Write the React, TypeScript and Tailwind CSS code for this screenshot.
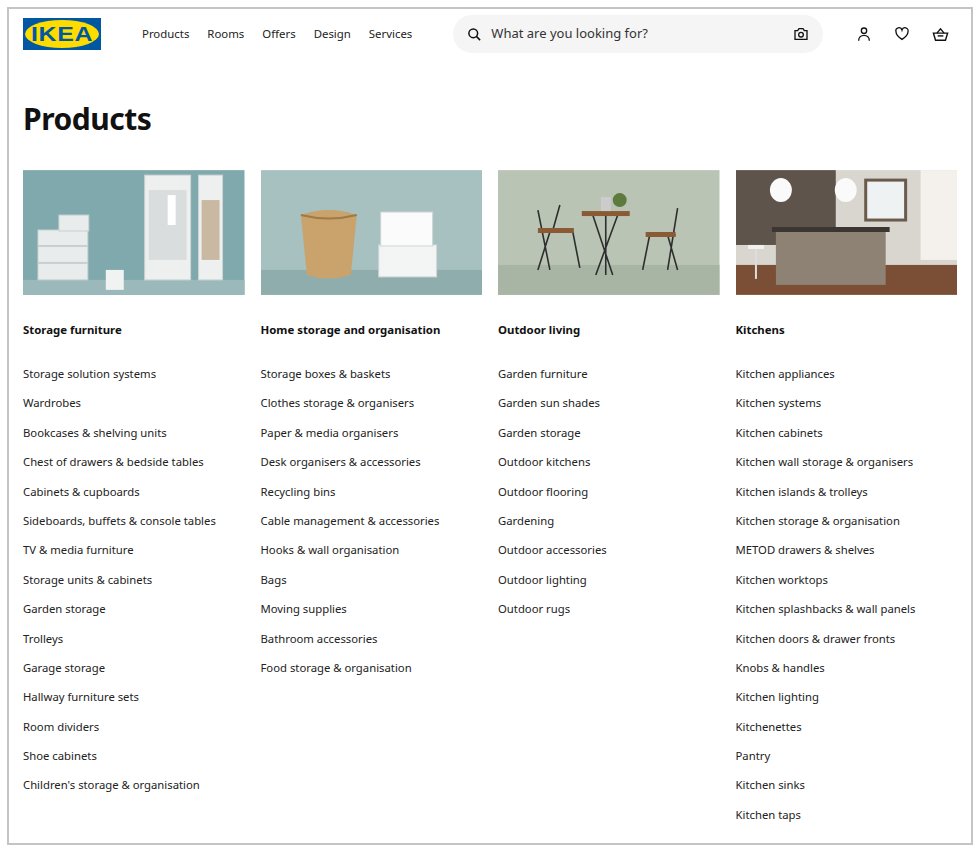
import React from "react";

const cols: { title: string; items: string[]; img: React.ReactNode }[] = [
  {
    title: "Storage furniture",
    items: ["Storage solution systems","Wardrobes","Bookcases & shelving units","Chest of drawers & bedside tables","Cabinets & cupboards","Sideboards, buffets & console tables","TV & media furniture","Storage units & cabinets","Garden storage","Trolleys","Garage storage","Hallway furniture sets","Room dividers","Shoe cabinets","Children's storage & organisation"],
    img: (
      <svg viewBox="0 0 222 125" className="w-full h-full">
        <rect width="222" height="125" fill="#7fa9ad" />
        <rect y="110" width="222" height="15" fill="#9bb9bb" />
        <rect x="15" y="60" width="50" height="50" fill="#e8ecec" stroke="#c8cfcf" />
        <rect x="15" y="75" width="50" height="2" fill="#c8cfcf" />
        <rect x="15" y="92" width="50" height="2" fill="#c8cfcf" />
        <rect x="36" y="45" width="30" height="16" fill="#e8ecec" stroke="#c8cfcf" />
        <rect x="83" y="100" width="18" height="20" fill="#f1f3f3" />
        <rect x="122" y="5" width="46" height="105" fill="#eef0f0" stroke="#cfd5d5" />
        <rect x="126" y="20" width="38" height="70" fill="#d9dddd" />
        <rect x="145" y="25" width="8" height="30" fill="#fff" />
        <rect x="176" y="5" width="24" height="105" fill="#eef0f0" stroke="#cfd5d5" />
        <rect x="179" y="30" width="18" height="60" fill="#c9b9a2" />
      </svg>
    ),
  },
  {
    title: "Home storage and organisation",
    items: ["Storage boxes & baskets","Clothes storage & organisers","Paper & media organisers","Desk organisers & accessories","Recycling bins","Cable management & accessories","Hooks & wall organisation","Bags","Moving supplies","Bathroom accessories","Food storage & organisation"],
    img: (
      <svg viewBox="0 0 222 125" className="w-full h-full">
        <rect width="222" height="125" fill="#a6c1c0" />
        <rect y="100" width="222" height="25" fill="#8fadad" />
        <path d="M40 45 Q68 35 96 45 L90 105 Q68 112 46 105 Z" fill="#c9a36b" />
        <path d="M40 45 Q68 52 96 45" stroke="#9d7b48" fill="none" strokeWidth="2" />
        <rect x="118" y="75" width="58" height="32" fill="#f3f4f4" stroke="#d0d6d6" />
        <rect x="120" y="42" width="52" height="34" fill="#fbfbfb" stroke="#d0d6d6" />
      </svg>
    ),
  },
  {
    title: "Outdoor living",
    items: ["Garden furniture","Garden sun shades","Garden storage","Outdoor kitchens","Outdoor flooring","Gardening","Outdoor accessories","Outdoor lighting","Outdoor rugs"],
    img: (
      <svg viewBox="0 0 222 125" className="w-full h-full">
        <rect width="222" height="125" fill="#b9c4b4" />
        <rect y="95" width="222" height="30" fill="#a9b5a4" />
        <g stroke="#2e2e2e" strokeWidth="1.6" fill="none">
          <path d="M40 40 L52 100 M62 35 L55 60 M45 62 L75 62 L82 98 M52 62 L40 100" />
          <path d="M85 45 L130 45 M95 45 L115 105 M120 45 L98 105 M108 45 L108 105" />
          <path d="M180 38 L170 100 M150 65 L178 65 M152 65 L145 100 M170 65 L180 100" />
        </g>
        <rect x="40" y="58" width="36" height="5" fill="#8a5a34" />
        <rect x="84" y="41" width="48" height="5" fill="#8a5a34" />
        <rect x="148" y="62" width="30" height="5" fill="#8a5a34" />
        <rect x="103" y="27" width="10" height="14" fill="#ccc" />
        <circle cx="122" cy="30" r="7" fill="#5d7a3f" />
      </svg>
    ),
  },
  {
    title: "Kitchens",
    items: ["Kitchen appliances","Kitchen systems","Kitchen cabinets","Kitchen wall storage & organisers","Kitchen islands & trolleys","Kitchen storage & organisation","METOD drawers & shelves","Kitchen worktops","Kitchen splashbacks & wall panels","Kitchen doors & drawer fronts","Knobs & handles","Kitchen lighting","Kitchenettes","Pantry","Kitchen sinks","Kitchen taps"],
    img: (
      <svg viewBox="0 0 222 125" className="w-full h-full">
        <rect width="222" height="125" fill="#d9d5cf" />
        <rect x="0" y="0" width="100" height="75" fill="#5e544c" />
        <rect x="130" y="10" width="40" height="40" fill="#eef2f2" stroke="#6b5b4c" strokeWidth="3" />
        <rect x="185" y="0" width="37" height="90" fill="#f4f1ec" />
        <rect y="95" width="222" height="30" fill="#7a4f35" />
        <rect x="40" y="60" width="110" height="55" fill="#8d8274" />
        <rect x="36" y="57" width="118" height="5" fill="#3c3632" />
        <ellipse cx="45" cy="20" rx="11" ry="12" fill="#fafafa" />
        <ellipse cx="110" cy="20" rx="11" ry="12" fill="#fafafa" />
        <rect x="12" y="75" width="16" height="4" fill="#f0f0f0" />
        <rect x="19" y="79" width="2" height="30" fill="#ddd" />
      </svg>
    ),
  },
];

const IkeaLogo = () => (
  <svg viewBox="0 0 78 32" className="w-[78px] h-[32px]">
    <rect width="78" height="32" fill="#0058a3" />
    <ellipse cx="39" cy="16" rx="37" ry="14" fill="#ffdb00" />
    <text x="39" y="23" textAnchor="middle" fontFamily="Liberation Sans, Arial, sans-serif" fontWeight="900" fontSize="20" fill="#0058a3" letterSpacing="0.5" textLength="62" lengthAdjust="spacingAndGlyphs">IKEA</text>
  </svg>
);

export default function App() {
  return (
    <div className="min-h-[852px] bg-white p-[7px]" style={{ fontFamily: '"Noto Sans", sans-serif' }}>
      <div className="border-2 border-[#c4c4c4] px-[14px] min-h-[838px] text-[#111]">
        <header className="flex items-center h-[50px]">
          <IkeaLogo />
          <nav className="flex gap-[18px] ml-[41px] text-[11.4px] text-[#222]">
            {["Products","Rooms","Offers","Design","Services"].map(n => <span key={n}>{n}</span>)}
          </nav>
          <div className="ml-[41px] flex items-center w-[370px] h-[38px] rounded-full bg-[#f5f5f5] px-[14px]">
            <svg width="15" height="15" viewBox="0 0 24 24" fill="none" stroke="#111" strokeWidth="2.4"><circle cx="10" cy="10" r="7"/><path d="M15 15l6 6"/></svg>
            <span className="ml-[9px] text-[13px] text-[#333] flex-1">What are you looking for?</span>
            <svg width="16" height="16" viewBox="0 0 24 24" fill="none" stroke="#111" strokeWidth="2"><path d="M3 7h4l2-3h6l2 3h4v13H3z"/><circle cx="12" cy="13" r="3.5"/></svg>
          </div>
          <div className="ml-auto mr-[8px] flex gap-[22px] items-center">
            <svg width="16" height="16" viewBox="0 0 24 24" fill="none" stroke="#111" strokeWidth="2"><circle cx="12" cy="7" r="4"/><path d="M4 22c0-5 3.5-8 8-8s8 3 8 8"/></svg>
            <svg width="16" height="16" viewBox="0 0 24 24" fill="none" stroke="#111" strokeWidth="2"><path d="M12 20S3 14 3 8.5A4.5 4.5 0 0 1 12 6a4.5 4.5 0 0 1 9 2.5C21 14 12 20 12 20z"/></svg>
            <svg width="17" height="17" viewBox="0 0 24 24" fill="none" stroke="#111" strokeWidth="2"><path d="M2 10h20l-3 10H5z"/><path d="M7 10l5-6 5 6"/><path d="M8 14h8"/></svg>
          </div>
        </header>
        <h1 className="text-[30px] font-bold mt-[40px] leading-[40px] tracking-[-0.5px]">Products</h1>
        <div className="grid grid-cols-4 gap-[16px] mt-[31px]">
          {cols.map(c => (
            <div key={c.title}>
              <div className="h-[125px] overflow-hidden">{c.img}</div>
              <h2 className="text-[11.4px] font-bold mt-[26px] leading-[17px]">{c.title}</h2>
              <ul className="mt-[27px] text-[11.3px] text-[#222]">
                {c.items.map(i => <li key={i} className="h-[29.4px] leading-[17px]">{i}</li>)}
              </ul>
            </div>
          ))}
        </div>
      </div>
    </div>
  );
}
